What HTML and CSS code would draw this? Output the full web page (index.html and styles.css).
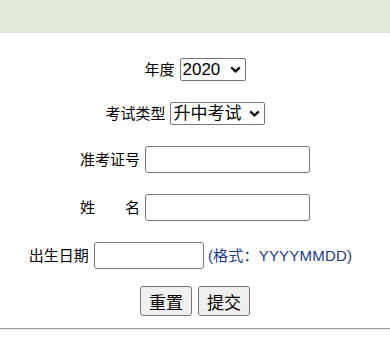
FILE: index.html
```html
<!DOCTYPE html>
<html lang="zh-CN">
<head>
<meta charset="utf-8">
<title>查询</title>
<link rel="stylesheet" href="styles.css">
</head>
<body>
<div class="topbar"></div>
<form class="form">
  <div class="row row-year">
    <label class="lbl" for="nd">年度</label>
    <span class="selwrap">
      <select id="nd" class="sel sel-year"><option>2020</option></select>
      <svg class="chev" width="11" height="7" viewBox="0 0 11 7" aria-hidden="true"><path d="M1.2 1.3 L5.5 5.4 L9.8 1.3" fill="none" stroke="#111" stroke-width="2.3"/></svg>
    </span>
  </div>
  <div class="row row-type">
    <label class="lbl" for="lx">考试类型</label>
    <span class="selwrap">
      <select id="lx" class="sel sel-type"><option>升中考试</option></select>
      <svg class="chev" width="11" height="7" viewBox="0 0 11 7" aria-hidden="true"><path d="M1.2 1.3 L5.5 5.4 L9.8 1.3" fill="none" stroke="#111" stroke-width="2.3"/></svg>
    </span>
  </div>
  <div class="row row-id">
    <label class="lbl" for="zkz">准考证号</label>
    <input id="zkz" class="inp inp-long" type="text">
  </div>
  <div class="row row-name">
    <label class="lbl" for="xm">姓　　名</label>
    <input id="xm" class="inp inp-long" type="text">
  </div>
  <div class="row row-date">
    <label class="lbl" for="csrq">出生日期</label>
    <input id="csrq" class="inp inp-short" type="text">
    <span class="hint">(格式：YYYYMMDD)</span>
  </div>
  <div class="row row-btn">
    <button type="reset" class="btn">重置</button>
    <button type="submit" class="btn">提交</button>
  </div>
</form>
<hr class="rule">
</body>
</html>
```
FILE: styles.css
```css
html, body {
  margin: 0;
  padding: 0;
  background: #fff;
}
body {
  font-family: "Liberation Sans", "Noto Sans CJK SC", sans-serif;
  font-size: 15px;
  color: #000;
}
.topbar {
  height: 33px;
  background: #e4ebdb;
}
.form {
  padding-top: 25px;
  margin: 0;
}
.row {
  display: flex;
  justify-content: center;
  align-items: center;
}
.row-year { height: 23px; gap: 5px; }
.row-type { height: 23px; gap: 4px; margin-top: 21px; padding-right: 20px; }
.row-id { height: 27px; gap: 5px; margin-top: 21px; }
.row-name { height: 27px; gap: 5px; margin-top: 21px; }
.row-date { height: 27px; gap: 5px; margin-top: 21px; padding-right: 9px; }
.row-btn { height: 30px; gap: 6px; margin-top: 17px; }
.lbl {
  font-size: 15px;
  line-height: 20px;
  white-space: pre;
}
.selwrap {
  position: relative;
  display: inline-flex;
}
.sel {
  -webkit-appearance: none;
  appearance: none;
  box-sizing: border-box;
  height: 23px;
  font-family: "Liberation Sans", "Noto Sans CJK SC", sans-serif;
  font-size: 17px;
  line-height: 21px;
  color: #000;
  background: #fff;
  border: 1px solid #767676;
  border-radius: 2px;
  padding: 0 0 0 2px;
  margin: 0;
}
.sel-year { width: 66px; }
.sel-type { width: 95px; padding-left: 3px; }
.chev {
  position: absolute;
  right: 5px;
  top: 8px;
  pointer-events: none;
}
.inp {
  box-sizing: border-box;
  height: 27px;
  border: 1px solid #767676;
  border-radius: 3px;
  background: #fff;
  margin: 0;
  padding: 1px 3px;
  font-size: 15px;
}
.inp-long { width: 165px; }
.inp-short { width: 110px; }
.hint {
  color: #1a3b86;
  font-size: 15px;
  line-height: 20px;
  white-space: nowrap;
  letter-spacing: 0.2px;
  margin-left: -1px;
}
.btn {
  box-sizing: border-box;
  width: 52px;
  height: 30px;
  font-family: "Liberation Sans", "Noto Sans CJK SC", sans-serif;
  font-size: 17px;
  color: #000;
  background: #efefef;
  border: 1px solid #767676;
  border-radius: 3px;
  padding: 0;
  margin: 0;
}
.rule {
  margin: 12px 0 0;
  height: 0;
  border: 0;
  border-top: 1px solid #9a9a9a;
  border-bottom: 1px solid #eeeeee;
}
```
